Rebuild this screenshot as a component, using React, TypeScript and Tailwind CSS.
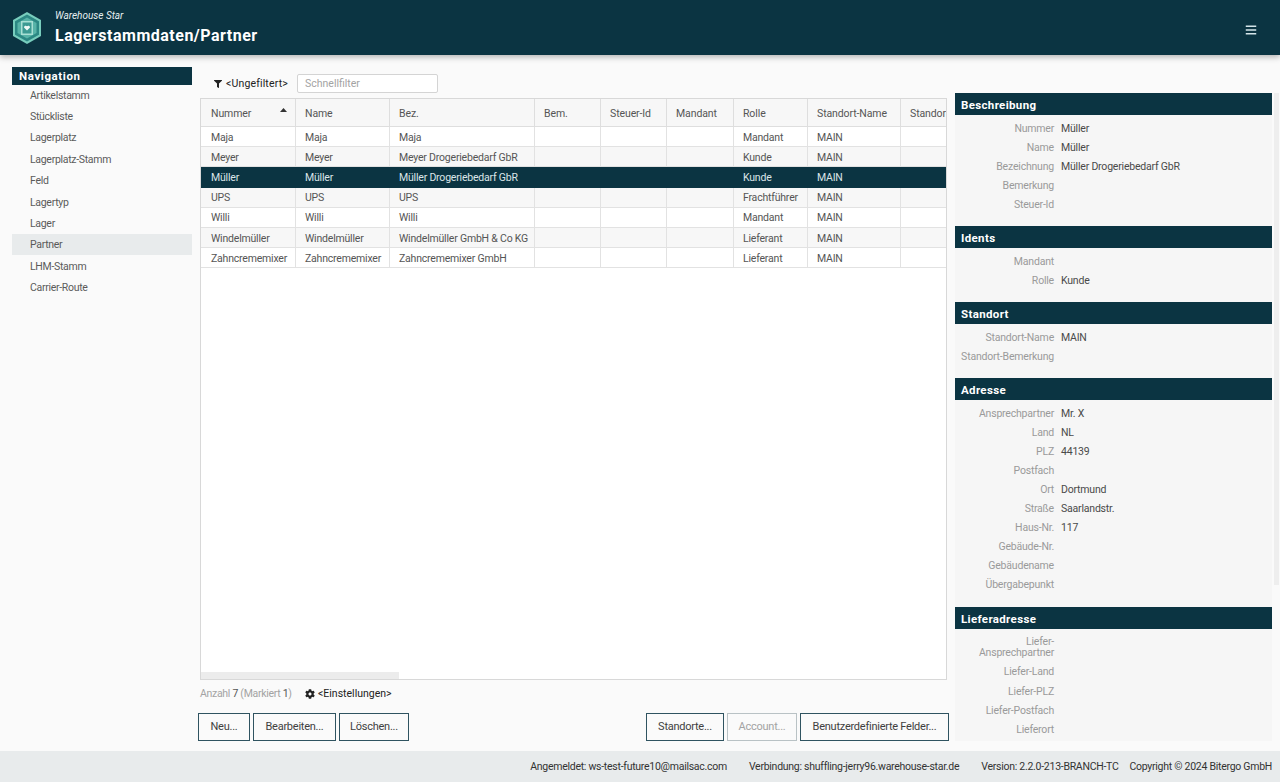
import { FaBars, FaCog, FaFilter } from 'react-icons/fa';

const NAV_ITEMS = [
  'Artikelstamm',
  'Stückliste',
  'Lagerplatz',
  'Lagerplatz-Stamm',
  'Feld',
  'Lagertyp',
  'Lager',
  'Partner',
  'LHM-Stamm',
  'Carrier-Route',
];

const COLUMNS = [
  { label: 'Nummer', width: 'w-[95px]' },
  { label: 'Name', width: 'w-[94px]' },
  { label: 'Bez.', width: 'w-[145px]' },
  { label: 'Bem.', width: 'w-[66px]' },
  { label: 'Steuer-Id', width: 'w-[66px]' },
  { label: 'Mandant', width: 'w-[67px]' },
  { label: 'Rolle', width: 'w-[74px]' },
  { label: 'Standort-Name', width: 'w-[93px]' },
  { label: 'Standort-Bemerkung', width: 'w-[46px]' },
];

const ROWS = [
  ['Maja', 'Maja', 'Maja', '', '', '', 'Mandant', 'MAIN', ''],
  ['Meyer', 'Meyer', 'Meyer Drogeriebedarf GbR', '', '', '', 'Kunde', 'MAIN', ''],
  ['Müller', 'Müller', 'Müller Drogeriebedarf GbR', '', '', '', 'Kunde', 'MAIN', ''],
  ['UPS', 'UPS', 'UPS', '', '', '', 'Frachtführer', 'MAIN', ''],
  ['Willi', 'Willi', 'Willi', '', '', '', 'Mandant', 'MAIN', ''],
  ['Windelmüller', 'Windelmüller', 'Windelmüller GmbH & Co KG', '', '', '', 'Lieferant', 'MAIN', ''],
  ['Zahncrememixer', 'Zahncrememixer', 'Zahncrememixer GmbH', '', '', '', 'Lieferant', 'MAIN', ''],
];

const SECTIONS: { title: string; fields: [string, string][] }[] = [
  {
    title: 'Beschreibung',
    fields: [
      ['Nummer', 'Müller'],
      ['Name', 'Müller'],
      ['Bezeichnung', 'Müller Drogeriebedarf GbR'],
      ['Bemerkung', ''],
      ['Steuer-Id', ''],
    ],
  },
  {
    title: 'Idents',
    fields: [
      ['Mandant', ''],
      ['Rolle', 'Kunde'],
    ],
  },
  {
    title: 'Standort',
    fields: [
      ['Standort-Name', 'MAIN'],
      ['Standort-Bemerkung', ''],
    ],
  },
  {
    title: 'Adresse',
    fields: [
      ['Ansprechpartner', 'Mr. X'],
      ['Land', 'NL'],
      ['PLZ', '44139'],
      ['Postfach', ''],
      ['Ort', 'Dortmund'],
      ['Straße', 'Saarlandstr.'],
      ['Haus-Nr.', '117'],
      ['Gebäude-Nr.', ''],
      ['Gebäudename', ''],
      ['Übergabepunkt', ''],
    ],
  },
  {
    title: 'Lieferadresse',
    fields: [
      ['Liefer-Ansprechpartner', ''],
      ['Liefer-Land', ''],
      ['Liefer-PLZ', ''],
      ['Liefer-Postfach', ''],
      ['Lieferort', ''],
    ],
  },
];

function Logo() {
  return (
    <svg width="30" height="34" viewBox="0 0 30 34" className="shrink-0">
      <polygon points="15,1 29,9 29,25 15,33 1,25 1,9" fill="#78cdbd" />
      <polygon points="15,3.5 27,10.3 27,23.7 15,30.5 3,23.7 3,10.3" fill="#2c8884" />
      <polygon points="15,6.5 24.5,12 24.5,22 15,27.5 5.5,22 5.5,12" fill="#58b3a8" />
      <rect x="9" y="10" width="12" height="14" fill="#a9e0d5" />
      <rect x="10.5" y="11.5" width="9" height="11" fill="#3c9a93" />
      <path d="M15 19.5l-3-3a1.7 1.7 0 0 1 3-1.2 1.7 1.7 0 0 1 3 1.2z" fill="#eef9f6" />
    </svg>
  );
}

function ActionButton({ label, width, disabled }: { label: string; width: string; disabled?: boolean }) {
  return (
    <button
      className={`${width} h-[28px] border text-[11px] tracking-[-0.25px] bg-[#fafafa] ${
        disabled ? 'border-[#b9c2c5] text-[#a3a3a3]' : 'border-[#2f5360] text-[#3f3f3f]'
      }`}
    >
      {label}
    </button>
  );
}

function DetailSection({ title, fields }: { title: string; fields: [string, string][] }) {
  return (
    <div>
      <div className="h-[22px] bg-[#0b3442] text-white font-bold text-[11.5px] tracking-[0.35px] pl-[6px] flex items-center pt-[3px]">
        {title}
      </div>
      <div className="pt-[3.5px] pb-[12.5px]">
        {fields.map(([label, value]) => (
          <div key={label} className="flex py-[4px] gap-[7px] text-[10.5px] tracking-[-0.2px] leading-[11.05px]">
            <div className="w-[99px] text-right text-[#9a9a9a] shrink-0">{label}</div>
            <div className="text-[#4a4a4a]">{value}</div>
          </div>
        ))}
      </div>
    </div>
  );
}

export default function App() {
  return (
    <div className="h-[782px] w-[1280px] overflow-hidden flex flex-col bg-[#fafafa] font-['Roboto',sans-serif] text-[11px] text-[#4a4a4a]">
      <header className="h-[55px] shrink-0 bg-[#0b3442] shadow-[0_2px_6px_rgba(0,0,0,0.3)] flex items-center pl-[12px] pr-[23px] z-10">
        <Logo />
        <div className="ml-[13px] flex-1 pt-[1px]">
          <div className="text-[10px] italic leading-[12px] text-[#e6eef0]">Warehouse Star</div>
          <div className="text-[16px] font-bold leading-[22px] mt-[3px] tracking-[0.5px] text-white">
            Lagerstammdaten/Partner
          </div>
        </div>
        <FaBars size={12} className="text-[#d5e5ea] mt-[4px]" />
      </header>

      <main className="flex-1 min-h-0 flex">
        <nav className="w-[180px] ml-[12px] mt-[12px] shrink-0">
          <div className="h-[18px] bg-[#0b3442] text-white font-bold text-[11.5px] tracking-[0.6px] pl-[7px] flex items-center pt-[2px]">
            Navigation
          </div>
          {NAV_ITEMS.map((item, i) => (
            <div
              key={item}
              className={`pl-[18px] pt-[1.5px] flex items-center text-[10.5px] tracking-[-0.3px] text-[#5a5a5a] ${
                i === 0 ? 'h-[20.6px]' : 'h-[21.35px]'
              } ${item === 'Partner' ? 'bg-[#e8ebec]' : ''}`}
            >
              {item}
            </div>
          ))}
        </nav>

        <section className="w-[747px] ml-[8px] shrink-0 flex flex-col">
          <div className="h-[43px] flex items-center pl-[14px] pt-[18px] pb-[4px]">
            <FaFilter size={8} className="text-[#222]" />
            <span className="ml-[4px] text-[10.5px] tracking-[0.15px] text-[#222] w-[61px] whitespace-nowrap">
              &lt;Ungefiltert&gt;
            </span>
            <div className="ml-[10px] w-[141px] h-[19px] border border-[#d4d4d4] rounded-[2px] bg-white pl-[7px] flex items-center text-[10.5px] text-[#a3a3a3]">
              Schnellfilter
            </div>
          </div>

          <div className="h-[582px] relative border border-[#d8d8d8] bg-white overflow-hidden">
            <div className="flex h-[28px] bg-[#f7f7f7] border-b border-[#dedede]">
              {COLUMNS.map((col, i) => (
                <div
                  key={col.label}
                  className={`${col.width} shrink-0 relative pt-[2px] flex items-center whitespace-nowrap overflow-hidden text-[10.5px] tracking-[-0.1px] text-[#555] ${
                    i === 0 ? 'pl-[10px]' : 'pl-[9px]'
                  } ${i < COLUMNS.length - 1 ? 'border-r border-[#dedede]' : ''}`}
                >
                  {col.label}
                  {i === 0 && (
                    <svg width="7" height="4" viewBox="0 0 7 4" className="absolute right-[8px] top-[9px]">
                      <path d="M0 4L3.5 0L7 4z" fill="#333" />
                    </svg>
                  )}
                </div>
              ))}
            </div>
            {ROWS.map((row, r) => {
              const selected = r === 2;
              return (
                <div
                  key={row[0]}
                  className={`flex h-[20.2px] border-b ${
                    selected
                      ? 'bg-[#0b3442] text-[#dbe5e8] border-[#0b3442]'
                      : `border-[#e2e2e2] text-[#555] ${r % 2 === 1 ? 'bg-[#f7f7f7]' : 'bg-white'}`
                  }`}
                >
                  {row.map((cell, c) => (
                    <div
                      key={COLUMNS[c].label}
                      className={`${COLUMNS[c].width} shrink-0 pt-[2px] flex items-center whitespace-nowrap overflow-hidden text-[10.5px] tracking-[-0.2px] ${
                        c === 0 ? 'pl-[10px]' : 'pl-[9px]'
                      } ${!selected && c < row.length - 1 ? 'border-r border-[#e2e2e2]' : ''}`}
                    >
                      {cell}
                    </div>
                  ))}
                </div>
              );
            })}
            <div className="absolute left-0 bottom-0 w-[198px] h-[7px] bg-[#ececec]" />
          </div>

          <div className="h-[27px] flex items-center text-[10.5px]">
            <span className="text-[#a3a3a3] w-[105px] tracking-[-0.3px] whitespace-nowrap">
              Anzahl <span className="text-[#555]">7</span> (Markiert <span className="text-[#555]">1</span>)
            </span>
            <FaCog size={10} className="text-[#222]" />
            <span className="ml-[3px] text-[10.5px] text-[#222]">&lt;Einstellungen&gt;</span>
          </div>

          <div className="flex items-center justify-between mt-[6px] ml-[-2px] mr-[-2px]">
            <div className="flex gap-[3px]">
              <ActionButton label="Neu..." width="w-[52px]" />
              <ActionButton label="Bearbeiten..." width="w-[83px]" />
              <ActionButton label="Löschen..." width="w-[70px]" />
            </div>
            <div className="flex gap-[3px]">
              <ActionButton label="Standorte..." width="w-[78px]" />
              <ActionButton label="Account..." width="w-[70px]" disabled />
              <ActionButton label="Benutzerdefinierte Felder..." width="w-[149px]" />
            </div>
          </div>
        </section>

        <aside className="w-[317px] ml-[8px] mt-[38px] mb-[10px] shrink-0 overflow-hidden bg-[#f6f6f6]">
          {SECTIONS.map((s) => (
            <DetailSection key={s.title} title={s.title} fields={s.fields} />
          ))}
        </aside>
        <div className="w-[5px] h-[492px] ml-[2px] mt-[38px] bg-[#eeeeee] shrink-0" />
      </main>

      <footer className="h-[31px] shrink-0 bg-[#e8ebec] flex items-center justify-end pr-[8px] text-[10.5px] tracking-[-0.27px] text-[#333]">
        <span>Angemeldet: ws-test-future10@mailsac.com</span>
        <span className="ml-[22px]">Verbindung: shuffling-jerry96.warehouse-star.de</span>
        <span className="ml-[22px]">Version: 2.2.0-213-BRANCH-TC</span>
        <span className="ml-[11px]">Copyright © 2024 Bitergo GmbH</span>
      </footer>
    </div>
  );
}
